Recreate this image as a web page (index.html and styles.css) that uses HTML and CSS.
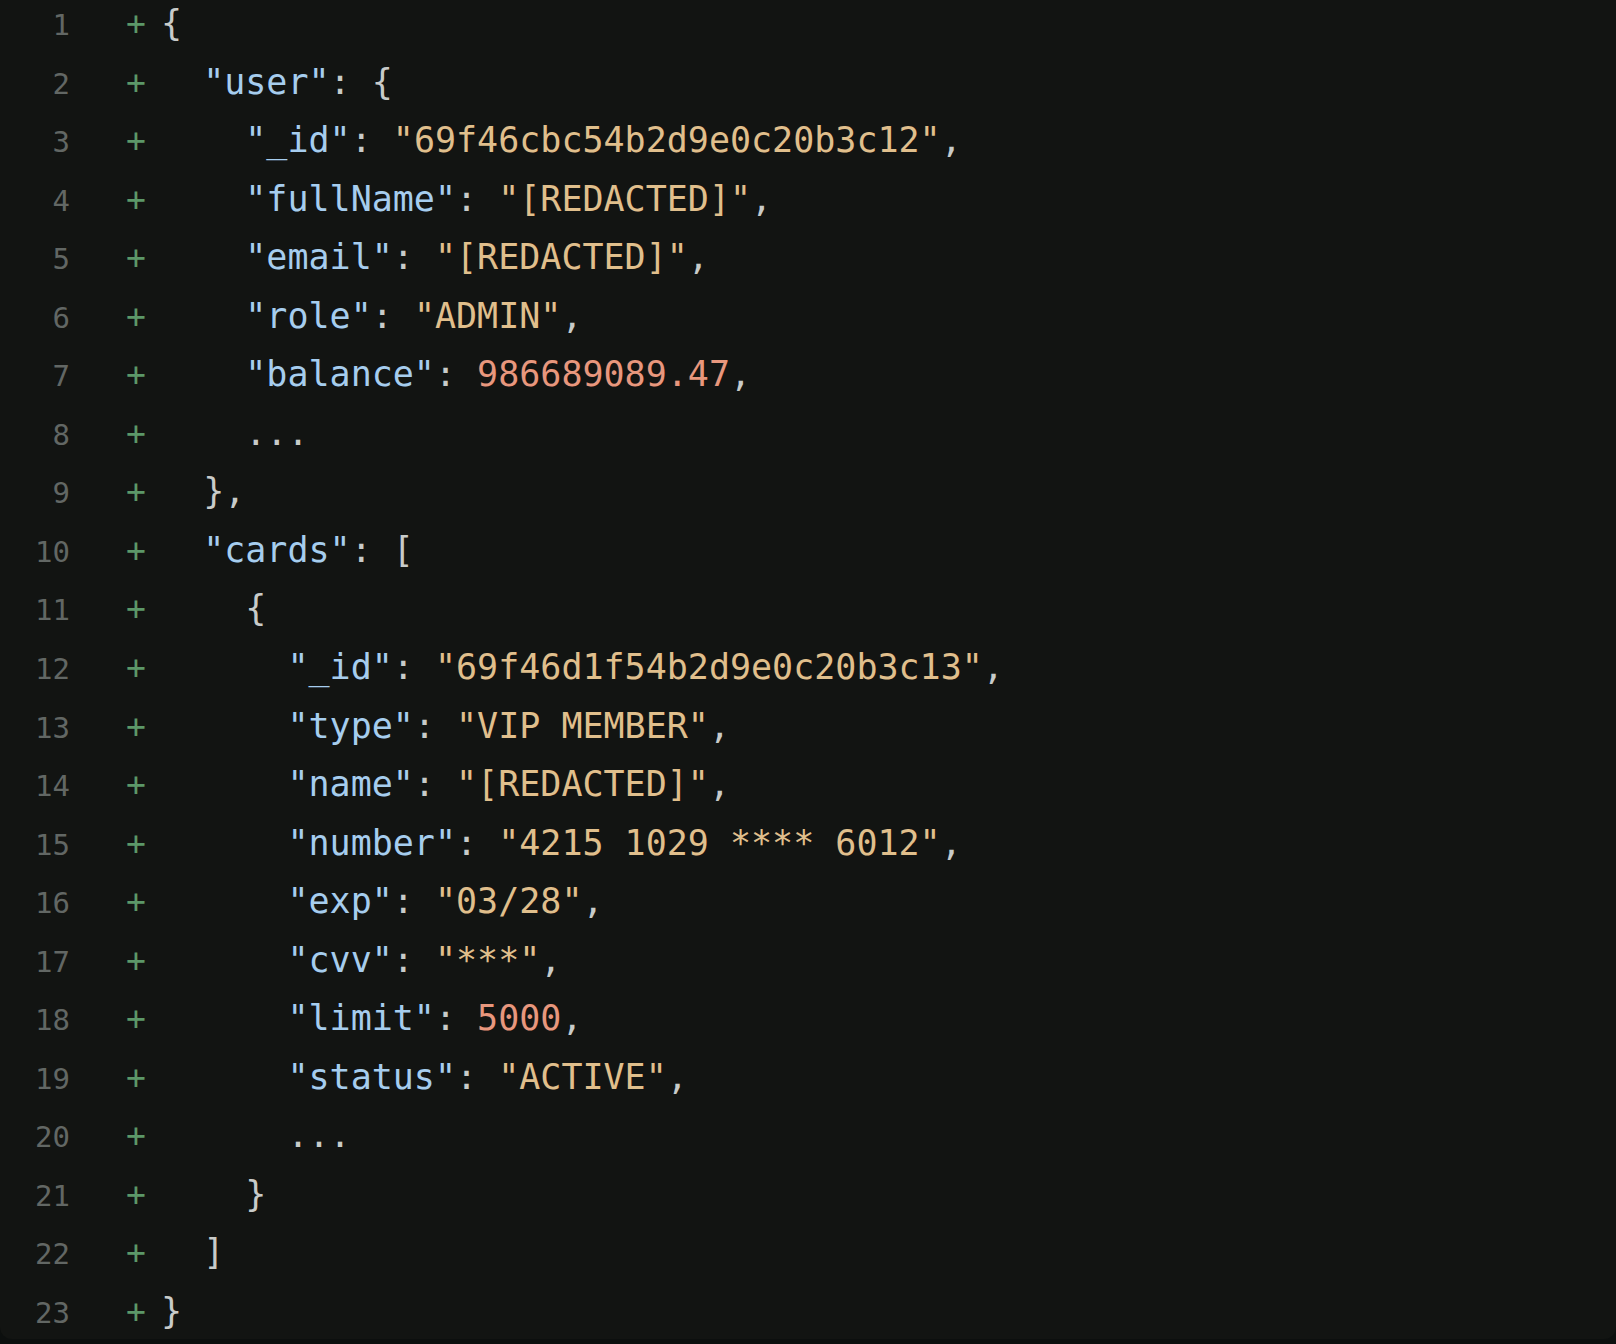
FILE: index.html
```html
<!DOCTYPE html>
<html>
<head>
<meta charset="utf-8">
<link rel="stylesheet" href="styles.css">
</head>
<body>
<div class="diff">
  <div class="row"><span class="ln">1</span><span class="sign">+</span><span class="code"><span class="p">{</span></span></div>
  <div class="row"><span class="ln">2</span><span class="sign">+</span><span class="code">  <span class="k">"user"</span><span class="p">: {</span></span></div>
  <div class="row"><span class="ln">3</span><span class="sign">+</span><span class="code">    <span class="k">"_id"</span><span class="p">: </span><span class="s">"69f46cbc54b2d9e0c20b3c12"</span><span class="p">,</span></span></div>
  <div class="row"><span class="ln">4</span><span class="sign">+</span><span class="code">    <span class="k">"fullName"</span><span class="p">: </span><span class="s">"[REDACTED]"</span><span class="p">,</span></span></div>
  <div class="row"><span class="ln">5</span><span class="sign">+</span><span class="code">    <span class="k">"email"</span><span class="p">: </span><span class="s">"[REDACTED]"</span><span class="p">,</span></span></div>
  <div class="row"><span class="ln">6</span><span class="sign">+</span><span class="code">    <span class="k">"role"</span><span class="p">: </span><span class="s">"ADMIN"</span><span class="p">,</span></span></div>
  <div class="row"><span class="ln">7</span><span class="sign">+</span><span class="code">    <span class="k">"balance"</span><span class="p">: </span><span class="n">986689089.47</span><span class="p">,</span></span></div>
  <div class="row"><span class="ln">8</span><span class="sign">+</span><span class="code">    <span class="p">...</span></span></div>
  <div class="row"><span class="ln">9</span><span class="sign">+</span><span class="code">  <span class="p">},</span></span></div>
  <div class="row"><span class="ln">10</span><span class="sign">+</span><span class="code">  <span class="k">"cards"</span><span class="p">: [</span></span></div>
  <div class="row"><span class="ln">11</span><span class="sign">+</span><span class="code">    <span class="p">{</span></span></div>
  <div class="row"><span class="ln">12</span><span class="sign">+</span><span class="code">      <span class="k">"_id"</span><span class="p">: </span><span class="s">"69f46d1f54b2d9e0c20b3c13"</span><span class="p">,</span></span></div>
  <div class="row"><span class="ln">13</span><span class="sign">+</span><span class="code">      <span class="k">"type"</span><span class="p">: </span><span class="s">"VIP MEMBER"</span><span class="p">,</span></span></div>
  <div class="row"><span class="ln">14</span><span class="sign">+</span><span class="code">      <span class="k">"name"</span><span class="p">: </span><span class="s">"[REDACTED]"</span><span class="p">,</span></span></div>
  <div class="row"><span class="ln">15</span><span class="sign">+</span><span class="code">      <span class="k">"number"</span><span class="p">: </span><span class="s">"4215 1029 **** 6012"</span><span class="p">,</span></span></div>
  <div class="row"><span class="ln">16</span><span class="sign">+</span><span class="code">      <span class="k">"exp"</span><span class="p">: </span><span class="s">"03/28"</span><span class="p">,</span></span></div>
  <div class="row"><span class="ln">17</span><span class="sign">+</span><span class="code">      <span class="k">"cvv"</span><span class="p">: </span><span class="s">"***"</span><span class="p">,</span></span></div>
  <div class="row"><span class="ln">18</span><span class="sign">+</span><span class="code">      <span class="k">"limit"</span><span class="p">: </span><span class="n">5000</span><span class="p">,</span></span></div>
  <div class="row"><span class="ln">19</span><span class="sign">+</span><span class="code">      <span class="k">"status"</span><span class="p">: </span><span class="s">"ACTIVE"</span><span class="p">,</span></span></div>
  <div class="row"><span class="ln">20</span><span class="sign">+</span><span class="code">      <span class="p">...</span></span></div>
  <div class="row"><span class="ln">21</span><span class="sign">+</span><span class="code">    <span class="p">}</span></span></div>
  <div class="row"><span class="ln">22</span><span class="sign">+</span><span class="code">  <span class="p">]</span></span></div>
  <div class="row"><span class="ln">23</span><span class="sign">+</span><span class="code"><span class="p">}</span></span></div>
</div>
</body>
</html>
```
FILE: styles.css
```css
html, body {
  margin: 0;
  padding: 0;
  background: #0c0f0e;
  width: 1616px;
  height: 1344px;
  overflow: hidden;
}

.diff {
  margin-top: -6px;
  height: 1345px;
  background: #121412;
  border-radius: 0 0 12px 12px;
  font-family: "DejaVu Sans Mono", "Liberation Mono", monospace;
  box-sizing: border-box;
}

.row {
  display: flex;
  align-items: baseline;
  height: 58.56px;
  line-height: 58.56px;
}

.ln {
  width: 70px;
  text-align: right;
  font-size: 29px;
  color: #626764;
  flex: none;
}

.sign {
  width: 22px;
  margin-left: 55px;
  margin-right: 14px;
  text-align: center;
  font-size: 33px;
  font-weight: normal;
  color: #5c9868;
  flex: none;
}

.code {
  white-space: pre;
  font-size: 35px;
  color: #c8cbc9;
}

.k { color: #a6cdee; }
.s { color: #e0bf8c; }
.n { color: #e8977d; }
.p { color: #c8cbc9; }
```
